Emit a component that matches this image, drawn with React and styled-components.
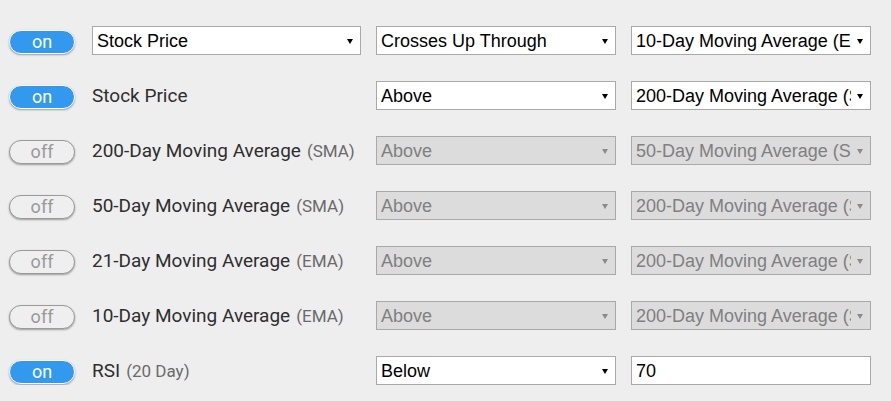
import styled, { createGlobalStyle } from "styled-components";

const GlobalStyle = createGlobalStyle`
  html, body {
    margin: 0;
    padding: 0;
    background: #eeeeee;
  }
  body {
    font-family: "Roboto", "Liberation Sans", sans-serif;
  }
`;

const rows = [
  { on: true, label: { select: "Stock Price" }, op: "Crosses Up Through", target: "10-Day Moving Average (EMA)" },
  { on: true, label: { text: "Stock Price" }, op: "Above", target: "200-Day Moving Average (SMA)" },
  { on: false, label: { text: "200-Day Moving Average", note: "(SMA)" }, op: "Above", target: "50-Day Moving Average (SMA)" },
  { on: false, label: { text: "50-Day Moving Average", note: "(SMA)" }, op: "Above", target: "200-Day Moving Average (SMA)" },
  { on: false, label: { text: "21-Day Moving Average", note: "(EMA)" }, op: "Above", target: "200-Day Moving Average (SMA)" },
  { on: false, label: { text: "10-Day Moving Average", note: "(EMA)" }, op: "Above", target: "200-Day Moving Average (SMA)" },
  { on: true, label: { text: "RSI", note: "(20 Day)" }, op: "Below", value: "70" },
];

function Select({ value, disabled }) {
  return (
    <SelectBox $disabled={disabled}>
      <SelectText>{value}</SelectText>
      <Arrow $disabled={disabled} />
    </SelectBox>
  );
}

function App() {
  return (
    <>
      <GlobalStyle />
      <Page>
        {rows.map((row, i) => (
          <Row key={i}>
            <ToggleCell>
              <Toggle $on={row.on}>{row.on ? "on" : "off"}</Toggle>
            </ToggleCell>
            {row.label.select ? (
              <Select value={row.label.select} />
            ) : (
              <Label>
                {row.label.text}
                {row.label.note && <Note>{row.label.note}</Note>}
              </Label>
            )}
            <Select value={row.op} disabled={!row.on} />
            {row.value ? (
              <TextInput>{row.value}</TextInput>
            ) : (
              <Select value={row.target} disabled={!row.on} />
            )}
          </Row>
        ))}
      </Page>
    </>
  );
}

const Page = styled.div`
  padding: 26px 20px 0 9px;
  display: flex;
  flex-direction: column;
  gap: 26px;
`;

const Row = styled.div`
  display: grid;
  grid-template-columns: 68px 269px 240px 240px;
  column-gap: 15px;
  height: 29px;
  align-items: center;
`;

const ToggleCell = styled.div`
  align-self: start;
  padding-top: 4px;
`;

const Toggle = styled.div`
  box-sizing: border-box;
  width: 66px;
  height: 24px;
  border-radius: 12px;
  border: 1px solid ${(p) => (p.$on ? "#ffffff" : "#9a9a9a")};
  background: ${(p) => (p.$on ? "#3399ee" : "#efefef")};
  color: ${(p) => (p.$on ? "#ffffff" : "#999999")};
  box-shadow: 0 1px 2px rgba(0, 0, 0, 0.35);
  font-family: "Roboto", "Liberation Sans", sans-serif;
  font-size: 18px;
  line-height: 22px;
  text-align: center;
`;

const Label = styled.div`
  font-family: "Roboto", "Liberation Sans", sans-serif;
  font-size: 19px;
  color: #2e2e2e;
  white-space: nowrap;
`;

const Note = styled.span`
  font-size: 17px;
  color: #6a6a6a;
  margin-left: 6px;
`;

const SelectBox = styled.div`
  box-sizing: border-box;
  height: 29px;
  border: 1px solid #a9a9a9;
  background: ${(p) => (p.$disabled ? "#dcdcdc" : "#ffffff")};
  color: ${(p) => (p.$disabled ? "#808080" : "#000000")};
  display: flex;
  align-items: center;
  padding: 1px 7px 0 4px;
  font-family: "Liberation Sans", Arial, sans-serif;
  font-size: 18px;
`;

const SelectText = styled.span`
  flex: 1;
  overflow: hidden;
  white-space: nowrap;
  line-height: 26px;
  margin-right: 6px;
`;

const Arrow = styled.span`
  width: 0;
  height: 0;
  border-left: 3px solid transparent;
  border-right: 3px solid transparent;
  border-top: 5px solid ${(p) => (p.$disabled ? "#8a8a8a" : "#000000")};
`;

const TextInput = styled.div`
  box-sizing: border-box;
  height: 29px;
  border: 1px solid #a9a9a9;
  background: #ffffff;
  color: #000000;
  padding: 1px 4px 0;
  font-family: "Liberation Sans", Arial, sans-serif;
  font-size: 18px;
  line-height: 26px;
`;

export default App;
